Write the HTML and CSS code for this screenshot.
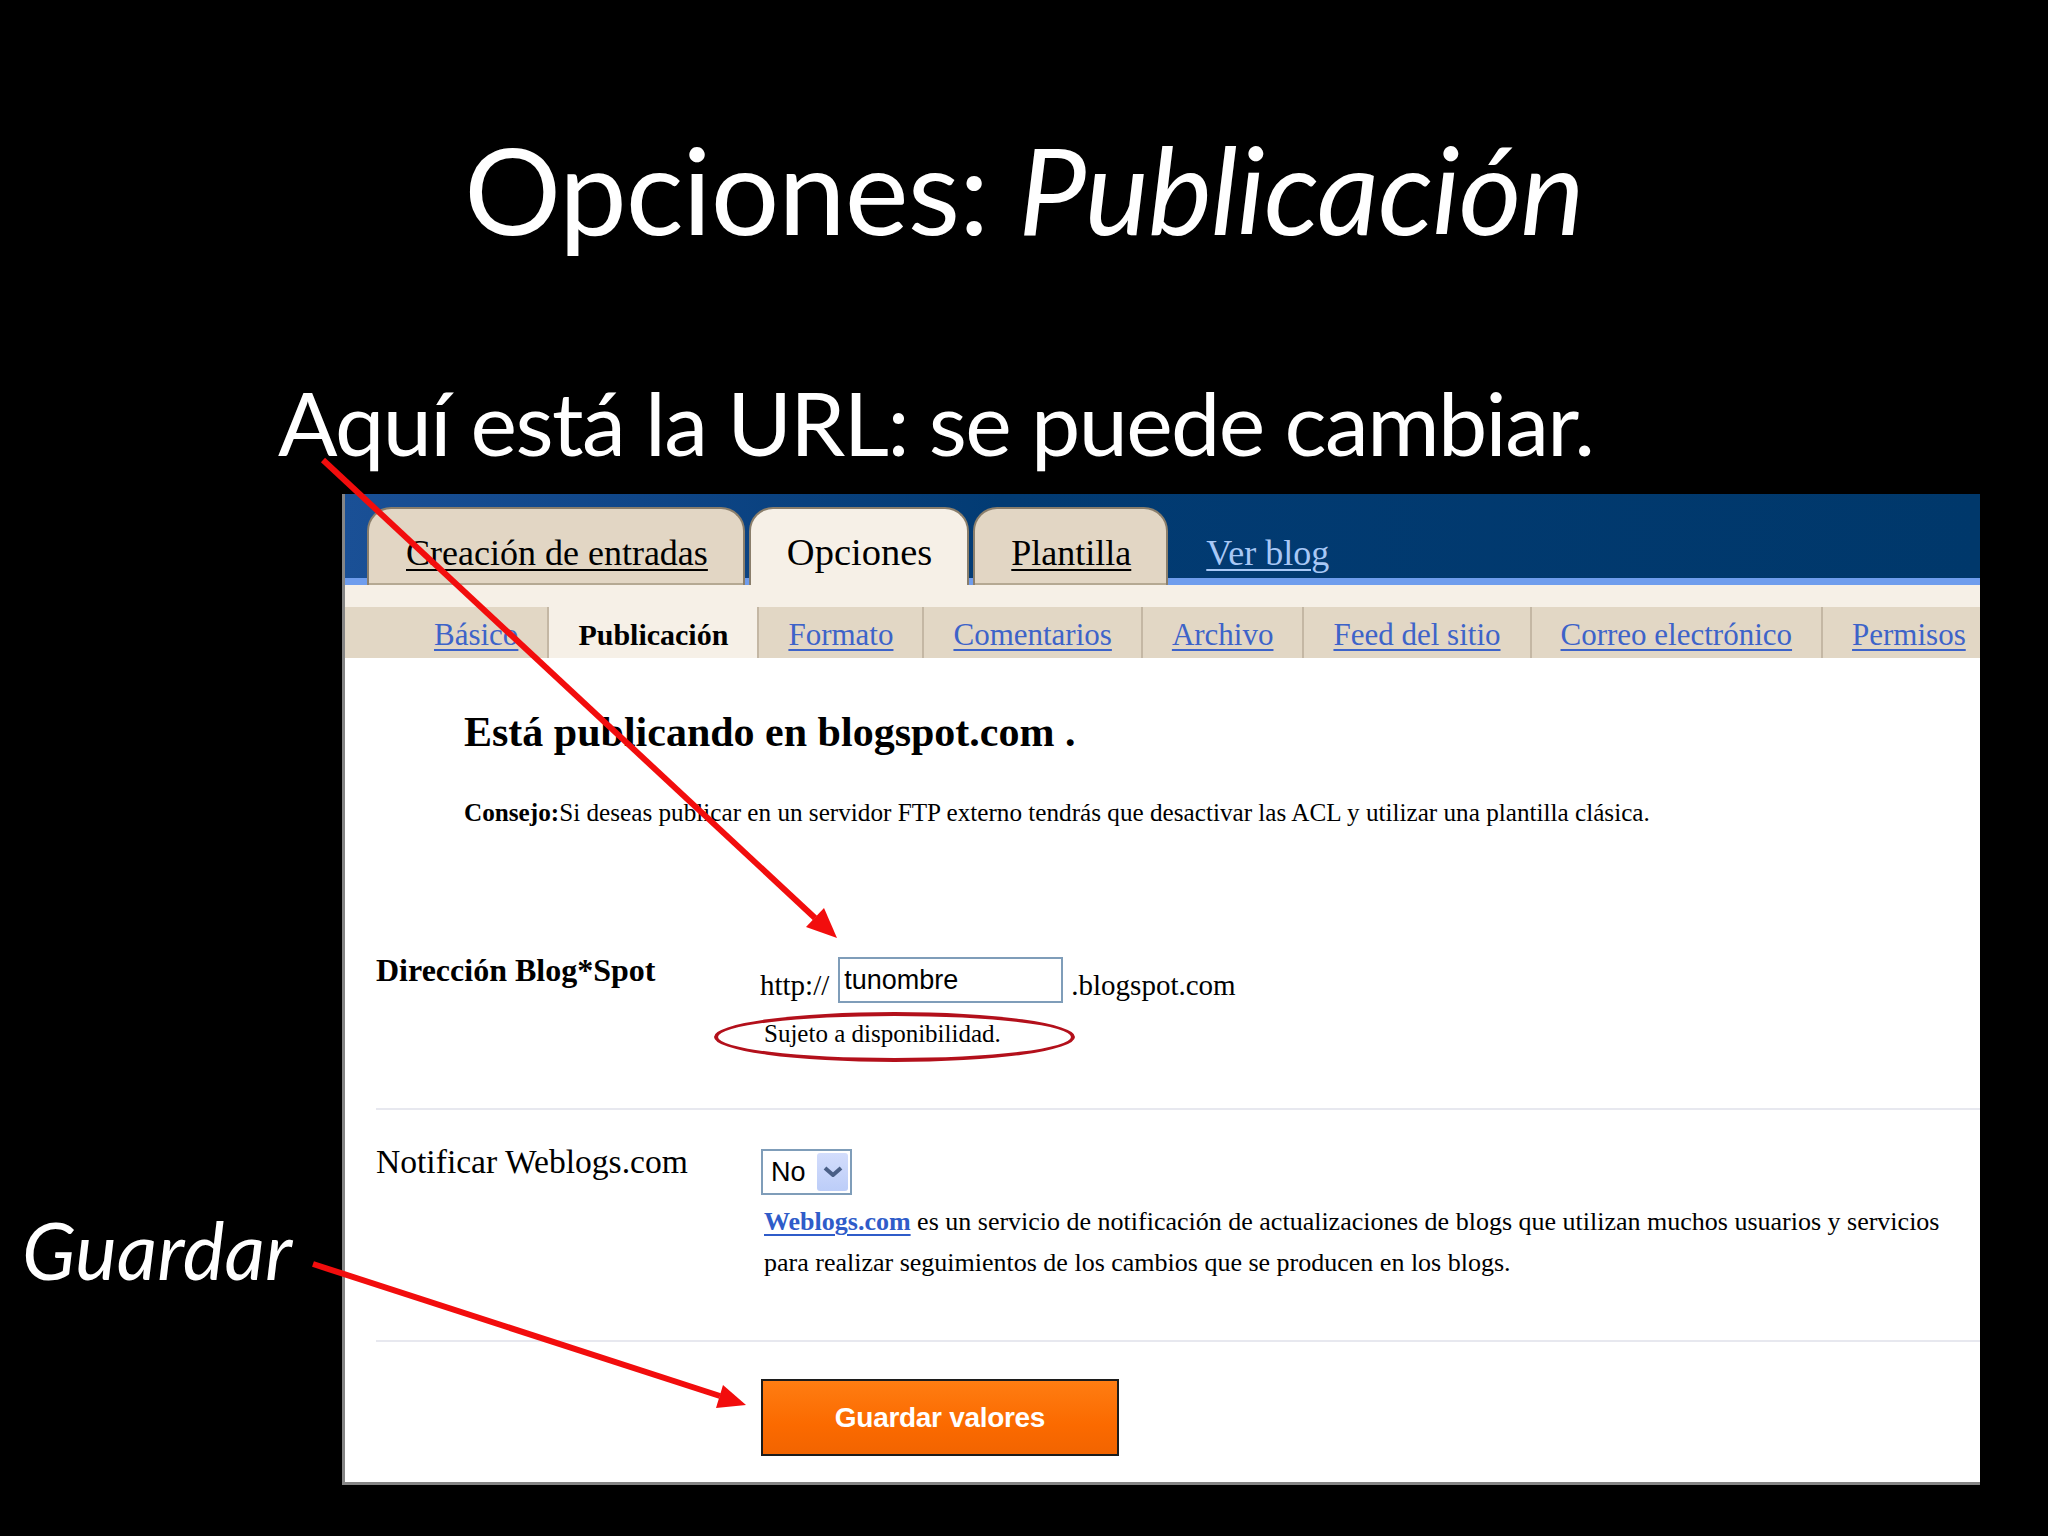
FILE: index.html
```html
<!DOCTYPE html>
<html lang="es">
<head>
<meta charset="utf-8">
<title>Opciones: Publicación</title>
<link rel="stylesheet" href="styles.css">
</head>
<body>
<div class="slide">
  <h1 class="title">Opciones: <em>Publicación</em></h1>
  <p class="subtitle">Aquí está la URL: se puede cambiar.</p>
  <div class="stage">
    <div class="side"><span class="side-label">Guardar</span></div>
    <div class="shot">
      <div class="tabbar">
        <span class="tab tab-first">Creación de entradas</span>
        <span class="tab tab-active">Opciones</span>
        <span class="tab tab-third">Plantilla</span>
        <span class="tab-link">Ver blog</span>
      </div>
      <div class="band"></div>
      <nav class="subtabs">
        <span class="subtab"><span class="sublink">Básico</span></span>
        <span class="subtab subtab-active">Publicación</span>
        <span class="subtab"><span class="sublink">Formato</span></span>
        <span class="subtab"><span class="sublink">Comentarios</span></span>
        <span class="subtab"><span class="sublink">Archivo</span></span>
        <span class="subtab"><span class="sublink">Feed del sitio</span></span>
        <span class="subtab"><span class="sublink">Correo electrónico</span></span>
        <span class="subtab"><span class="sublink">Permisos</span></span>
      </nav>
      <div class="content">
        <div class="notice">
          <h2 class="notice-title">Está publicando en blogspot.com .</h2>
          <p class="notice-tip"><b>Consejo:</b>Si deseas publicar en un servidor FTP externo tendrás que desactivar las ACL y utilizar una plantilla clásica.</p>
        </div>
        <div class="form-row row-url">
          <div class="label label-bold">Dirección Blog*Spot</div>
          <div class="field">
            <div class="url-line">
              <span class="url-text">http://</span>
              <input class="url-input" type="text" value="tunombre">
              <span class="url-text">.blogspot.com</span>
            </div>
            <div class="hint"><span class="hint-text">Sujeto a disponibilidad.</span></div>
          </div>
        </div>
        <div class="form-row row-notify">
          <div class="label">Notificar Weblogs.com</div>
          <div class="field">
            <div class="select">
              <span class="select-value">No</span>
              <span class="select-btn">
                <svg width="22" height="14" viewBox="0 0 22 14"><path d="M3 3 L11 10 L19 3" fill="none" stroke="#4a5f86" stroke-width="4" stroke-linejoin="round"/></svg>
              </span>
            </div>
            <p class="desc"><span class="desc-link">Weblogs.com</span> es un servicio de notificación de actualizaciones de blogs que utilizan muchos usuarios y servicios para realizar seguimientos de los cambios que se producen en los blogs.</p>
          </div>
        </div>
        <div class="form-actions">
          <span class="save-btn">Guardar valores</span>
        </div>
      </div>
    </div>
  </div>
  <svg class="arrows" width="2048" height="1536" viewBox="0 0 2048 1536">
    <line x1="323" y1="460" x2="815" y2="918" stroke="#f20d0d" stroke-width="6"/>
    <polygon points="837,938 806,927 824,908" fill="#f20d0d"/>
    <line x1="313" y1="1264" x2="720" y2="1396" stroke="#f20d0d" stroke-width="6"/>
    <polygon points="746,1405 716,1408 723,1385" fill="#f20d0d"/>
  </svg>
</div>
</body>
</html>
```
FILE: styles.css
```css
html, body {
  margin: 0;
  padding: 0;
  background: #000;
}

.slide {
  position: relative;
  width: 2048px;
  height: 1536px;
  overflow: hidden;
  background: #000;
  color: #fff;
  font-family: Lato, "Open Sans", sans-serif;
}

.title {
  margin: 0;
  padding-top: 116px;
  font-size: 121px;
  line-height: 1.2;
  font-weight: 400;
  text-align: center;
  letter-spacing: -1px;
}

.title em {
  font-style: italic;
}

.subtitle {
  margin: 109px 0 0 0;
  padding-left: 278px;
  font-size: 88px;
  line-height: 1.2;
  letter-spacing: -1.6px;
}

.stage {
  display: flex;
  margin-top: 18px;
}

.side {
  width: 342px;
  flex: none;
  padding: 709px 0 0 22px;
  box-sizing: border-box;
}

.side-label {
  display: block;
  font-size: 79px;
  line-height: 1.2;
  font-style: italic;
}

/* ---- screenshot panel ---- */
.shot {
  width: 1638px;
  height: 991px;
  flex: none;
  box-sizing: border-box;
  border-left: 3px solid #858585;
  border-bottom: 3px solid #858585;
  background: #fff;
  overflow: hidden;
  color: #000;
  font-family: "Liberation Serif", "Times New Roman", serif;
}

.tabbar {
  display: flex;
  align-items: flex-end;
  gap: 4px;
  height: 91px;
  box-sizing: border-box;
  padding-left: 22px;
  background:
    linear-gradient(to top, #6f9ded 0, #6f9ded 7px, transparent 7px),
    linear-gradient(90deg, #1a5096 0%, #0f4688 18%, #023b73 40%, #00386b 100%);
}

.tab {
  display: block;
  height: 78px;
  box-sizing: border-box;
  padding: 26px 37px 0;
  border: 2px solid #8a7e6b;
  border-bottom: none;
  border-radius: 24px 24px 0 0;
  background: #e2d6c4;
  box-shadow: inset 0 -2px 0 #b5a993;
  font-size: 36px;
  line-height: 36px;
  text-decoration: underline;
  text-decoration-thickness: 2px;
  text-underline-offset: 4px;
  white-space: nowrap;
}

.tab-first {
  padding: 26px 35px 0 37px;
}

.tab-third {
  padding: 26px 35px 0 36px;
}

.tab-active {
  background: #f6f0e7;
  box-shadow: none;
  text-decoration: none;
  padding: 25px 35px 0 36px;
  font-size: 38.5px;
}

.tab-link {
  display: block;
  height: 78px;
  box-sizing: border-box;
  padding: 28px 0 0 34px;
  font-size: 36px;
  line-height: 36px;
  color: #a8c8f6;
  text-decoration: underline;
  text-decoration-thickness: 2px;
  text-underline-offset: 4px;
}

.band {
  height: 22px;
  background: #f6f0e7;
}

.subtabs {
  display: flex;
  height: 51px;
  padding-left: 60px;
  background: #e2d7c5;
  white-space: nowrap;
}

.subtab {
  display: block;
  height: 51px;
  box-sizing: border-box;
  padding: 3px 29px 0;
  border-right: 2px solid #c4b7a4;
  font-size: 31px;
  line-height: 49px;
  flex: none;
}

.subtab-active {
  background: #f6f0e7;
  border-left: 2px solid #c4b7a4;
  margin-left: -2px;
  font-weight: 700;
  font-size: 30px;
}

.sublink {
  color: #3d63c9;
  text-decoration: underline;
  text-decoration-thickness: 2px;
  text-underline-offset: 4px;
}

.content {
  padding: 49px 0 0 31px;
}

.notice {
  padding-left: 88px;
}

.notice-title {
  margin: 0;
  font-size: 42px;
  line-height: 1.2;
  font-weight: 700;
}

.notice-tip {
  margin: 41px 0 0;
  font-size: 25.2px;
  line-height: 1.2;
  white-space: nowrap;
}

.form-row {
  display: grid;
  grid-template-columns: 384px 1fr;
  border-bottom: 2px solid #e7e8ef;
}

.row-url {
  margin-top: 122px;
  padding-bottom: 59px;
}

.row-notify {
  padding-top: 32px;
  padding-bottom: 57px;
}

.label {
  font-size: 33.6px;
  line-height: 40px;
  white-space: nowrap;
}

.label-bold {
  font-weight: 700;
  font-size: 32px;
}

.field {
  padding-top: 7px;
}

.url-line {
  display: flex;
  align-items: flex-end;
}

.url-text {
  font-size: 29px;
  line-height: 29px;
  padding-bottom: 3px;
}

.url-input {
  width: 225px;
  height: 46px;
  box-sizing: border-box;
  margin: 0 8px 0 9px;
  padding: 0 4px;
  border: 2px solid #7f9db9;
  border-radius: 0;
  background: #fff;
  color: #000;
  font-family: "Liberation Sans", Arial, sans-serif;
  font-size: 27px;
  outline: none;
}

.hint {
  margin-top: 16px;
  padding-left: 4px;
}

.hint-text {
  position: relative;
  display: inline-block;
  font-size: 25px;
  line-height: 30px;
}

.hint-text::after {
  content: "";
  position: absolute;
  left: -50px;
  top: -7px;
  width: 361px;
  height: 50px;
  box-sizing: border-box;
  border: 4px solid #b3101b;
  border-radius: 50%;
}

.select {
  display: flex;
  align-items: center;
  width: 91px;
  height: 46px;
  box-sizing: border-box;
  margin-left: 1px;
  border: 2px solid #7f9db9;
  background: #fff;
}

.select-value {
  flex: 1;
  padding-left: 8px;
  font-family: "Liberation Sans", Arial, sans-serif;
  font-size: 27px;
  line-height: 1;
}

.select-btn {
  display: flex;
  align-items: center;
  justify-content: center;
  width: 31px;
  height: 38px;
  margin-right: 2px;
  border-radius: 3px;
  background: linear-gradient(#d3ddfc, #bccdf8);
}

.select-btn svg {
  display: block;
}

.desc {
  width: 1200px;
  margin: 6px 0 0;
  padding-left: 4px;
  font-size: 26px;
  line-height: 41px;
}

.desc-link {
  color: #2f5cc9;
  font-weight: 700;
  text-decoration: underline;
  text-decoration-thickness: 2px;
  text-underline-offset: 4px;
}

.form-actions {
  padding: 37px 0 0 385px;
}

.save-btn {
  display: block;
  width: 358px;
  height: 77px;
  box-sizing: border-box;
  border: 2px solid #1c1c1c;
  background: linear-gradient(#ff7d12, #fb6a00 60%, #f26400);
  color: #fff;
  font-family: "Liberation Sans", Arial, sans-serif;
  font-weight: 700;
  font-size: 28px;
  line-height: 73px;
  text-align: center;
  letter-spacing: -0.3px;
}

.arrows {
  position: absolute;
  left: 0;
  top: 0;
  pointer-events: none;
}
```
